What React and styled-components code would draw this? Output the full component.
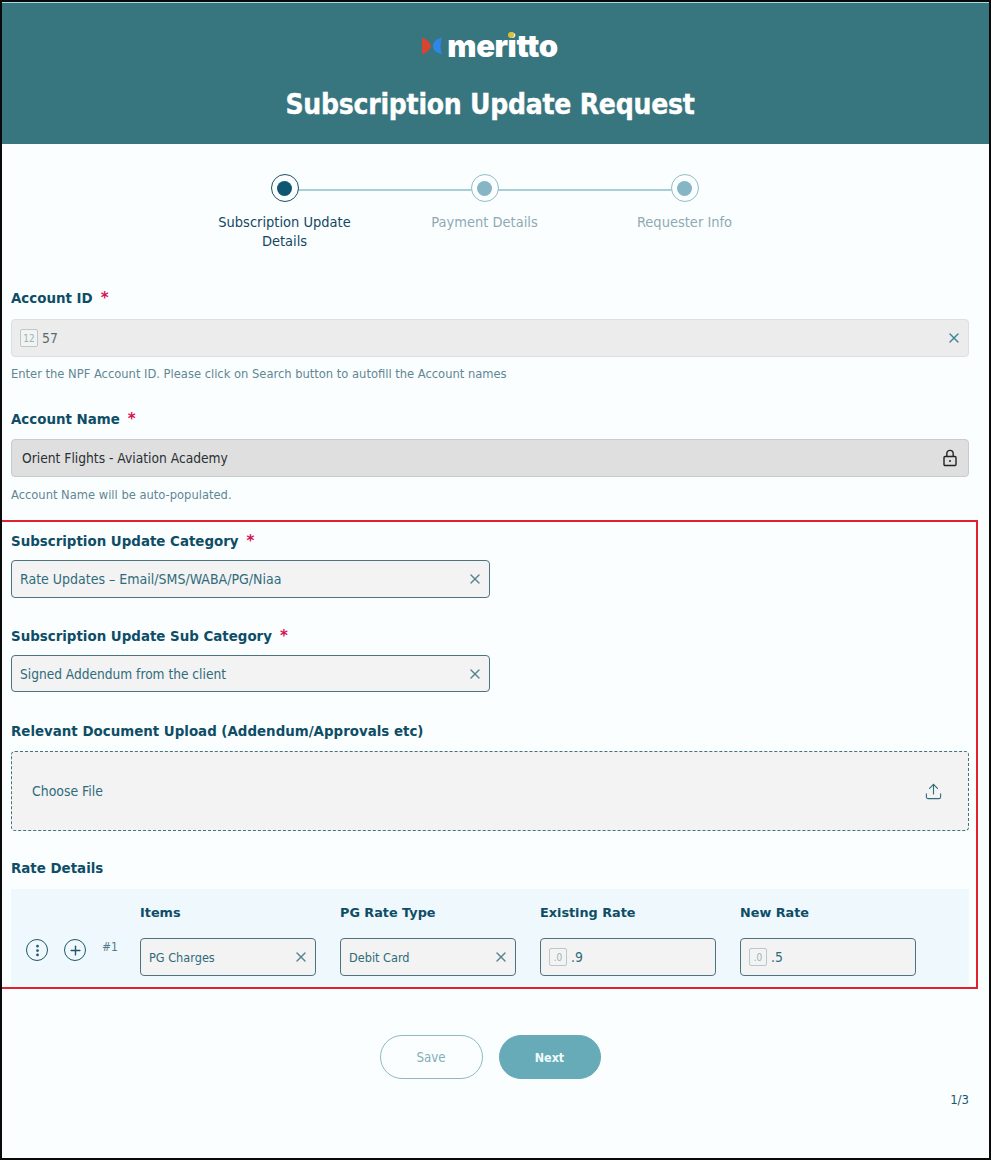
import React from "react";
import styled, { createGlobalStyle } from "styled-components";
import { X, Upload, Plus, EllipsisVertical } from "lucide-react";

const Global = createGlobalStyle`
  html, body { margin: 0; padding: 0; background: #000; }
  body { font-family: "DejaVu Sans Condensed", "DejaVu Sans", sans-serif; }
  * { box-sizing: border-box; }
`;

const Page = styled.div`
  position: relative;
  width: 991px;
  height: 1160px;
  border: solid #0a0a0a;
  border-width: 2px;
  background: #fbfeff;
  overflow: hidden;
`;
const Header = styled.header`
  height: 142px;
  border-top: 1px solid #a9dce2;
  background: #37757f;
  display: flex;
  flex-direction: column;
  align-items: center;
  padding: 27px 11px 0 0;
`;
const Logo = styled.div`
  display: flex;
  align-items: center;
  gap: 3px;
  height: 32px;
`;
const LogoWord = styled.span`
  position: relative;
  font-family: Inter, sans-serif;
  font-weight: 900;
  font-size: 31px;
  line-height: 32px;
  letter-spacing: -0.4px;
  color: #fff;
`;
const LogoDot = styled.i`
  position: absolute;
  left: 61px;
  top: 2px;
  width: 6px;
  height: 6px;
  border-radius: 50%;
  background: #d6c23c;
`;
const Title = styled.h1`
  margin: 26px 0 0;
  font-size: 28px;
  line-height: 34px;
  font-weight: 700;
  letter-spacing: -0.25px;
  -webkit-text-stroke: 0.4px #fff;
  color: #fff;
`;
const Stepper = styled.div`
  display: grid;
  grid-template-columns: repeat(3, 200px);
  justify-content: center;
  margin: 30px 0 0 -22px;
  height: 114px;
`;
const Step = styled.div`
  position: relative;
  display: flex;
  flex-direction: column;
  align-items: center;
  text-align: center;
`;
const StepRing = styled.div`
  width: 28px;
  height: 28px;
  border-radius: 50%;
  border: 1px solid ${p => (p.$active ? "#1c5068" : "#8fbcc6")};
  background: #fbfeff;
  display: flex;
  align-items: center;
  justify-content: center;
  z-index: 1;
`;
const StepDot = styled.div`
  width: 15px;
  height: 15px;
  border-radius: 50%;
  background: ${p => (p.$active ? "#0f5673" : "#86b6c5")};
`;
const StepLine = styled.div`
  position: absolute;
  left: 50%;
  width: 100%;
  top: 15px;
  height: 2px;
  background: #a9cfd6;
`;
const StepLabel = styled.div`
  margin-top: 11px;
  width: 150px;
  font-size: 14.5px;
  line-height: 19px;
  color: ${p => (p.$active ? "#13475f" : "#8eaab5")};
`;
const Form = styled.main`
  padding: 0 20px 0 9px;
`;
const Field = styled.div`
  margin-bottom: ${p => p.$mb || 0}px;
`;
const Label = styled.label`
  display: block;
  font-family: "DejaVu Sans", sans-serif;
  font-weight: 700;
  font-size: ${p => p.$size || 13.4}px;
  line-height: 20px;
  color: #0e4d66;
  margin-bottom: ${p => p.$mb ?? 10}px;
`;
const Star = styled.span`
  color: #d5124f;
  margin-left: 8px;
  font-size: 15px;
  font-weight: 700;
`;
const Input = styled.div`
  display: flex;
  align-items: center;
  height: ${p => p.$h || 38}px;
  width: ${p => p.$w || "100%"};
  padding: 0 6px 0 ${p => p.$pl || 8}px;
  border-radius: 4px;
  font-size: ${p => p.$size || 13.8}px;
  border: 1px solid ${p => p.$border || "#4d7380"};
  background: ${p => p.$bg || "#f3f3f3"};
  color: ${p => p.$color || "#2f6b7b"};
`;
const InputText = styled.span`
  flex: 1;
  white-space: nowrap;
`;
const Help = styled.div`
  margin-top: ${p => p.$mt || 8}px;
  font-size: 12.8px;
  line-height: 18px;
  color: #5f8794;
`;
const TypeBadge = styled.span`
  display: inline-flex;
  align-items: center;
  justify-content: center;
  width: 18px;
  height: 18px;
  margin-right: 4px;
  border: 1px solid #bcc7ca;
  border-radius: 2px;
  background: #f2f4f4;
  color: #a3b0b4;
  font-size: 10px;
`;
const ClearIcon = styled(X)`
  width: 16px;
  height: 16px;
  flex: none;
  color: ${p => p.$tone || "#3f8196"};
`;
const LockSvg = styled.svg`
  width: 16px;
  height: 18px;
  margin-right: 4px;
  flex: none;
`;
const Drop = styled.div`
  display: flex;
  align-items: center;
  justify-content: space-between;
  height: 80px;
  padding: 0 25px 0 20px;
  border: 1px dashed #42747f;
  border-radius: 4px;
  background: #f3f3f3;
  font-size: 13.9px;
  color: #2f6b7b;
`;
const UploadIcon = styled(Upload)`
  width: 19px;
  height: 19px;
  color: #2f6b7b;
`;
const RatePanel = styled.div`
  display: flex;
  align-items: flex-start;
  height: 97px;
  padding: 14px 0 0 15px;
  background: #eff8fd;
`;
const RoundBtn = styled.div`
  width: 22px;
  height: 22px;
  border: 1.3px solid #21566b;
  border-radius: 50%;
  display: flex;
  align-items: center;
  justify-content: center;
  margin-right: 16px;
  color: #21566b;
`;
const RowActions = styled.div`
  display: flex;
  align-items: center;
  width: 114px;
  padding-top: 36px;
`;
const RowNum = styled.span`
  font-size: 12px;
  color: #53788a;
  margin-top: -6px;
`;
const RateGrid = styled.div`
  display: grid;
  grid-template-columns: repeat(4, 176px);
  column-gap: 24px;
`;
const Actions = styled.div`
  display: flex;
  justify-content: center;
  gap: 16px;
  margin-top: 49px;
`;
const Pill = styled.button`
  width: ${p => p.$w}px;
  height: 44px;
  border-radius: 22px;
  font-family: inherit;
  font-size: ${p => (p.$primary ? 12.4 : 13.2)}px;
  font-weight: ${p => (p.$primary ? 700 : 400)};
  border: 1px solid ${p => (p.$primary ? "#67abb9" : "#8fb9bf")};
  background: ${p => (p.$primary ? "#67abb9" : "#fbfeff")};
  color: ${p => (p.$primary ? "#f1fbfc" : "#82aeb4")};
`;
const Pager = styled.div`
  margin-top: 12px;
  text-align: right;
  font-size: 13px;
  line-height: 18px;
  color: #21566b;
`;
const Annotation = styled.div`
  position: absolute;
  left: -2px;
  top: 518px;
  width: 978px;
  height: 469px;
  border: 2.5px solid #e2202e;
  pointer-events: none;
`;

const Lock = () => (
  <LockSvg viewBox="0 0 16 18" fill="none" stroke="#222" strokeWidth="1.4">
    <rect x="2" y="7.5" width="12" height="9" rx="1" />
    <path d="M4.8 7.5V4.6a3.2 3.2 0 0 1 6.4 0v2.9" />
    <circle cx="8" cy="12" r="1" fill="#222" stroke="none" />
  </LockSvg>
);

const steps = [
  { label: "Subscription Update Details", active: true },
  { label: "Payment Details" },
  { label: "Requester Info", last: true },
];
const rates = [
  { label: "Items", value: "PG Charges" },
  { label: "PG Rate Type", value: "Debit Card" },
  { label: "Existing Rate", value: ".9", num: true },
  { label: "New Rate", value: ".5", num: true },
];

export default function App() {
  return (
    <Page>
      <Global />
      <Header>
        <Logo>
          <svg width="22" height="20" viewBox="0 0 22 20">
            <path d="M0 1.5 C4 3 8 6 9 10 C8 14 4 17 0 18.5 Z" fill="#d8442f" />
            <path d="M20 1.5 C14 3 11 6 11 10 C11 14 14 17 20 18.5 C18 13 18 7 20 1.5 Z" fill="#2f86e6" />
          </svg>
          <LogoWord>meritto<LogoDot /></LogoWord>
        </Logo>
        <Title>Subscription Update Request</Title>
      </Header>

      <Stepper>
        {steps.map(s => (
          <Step key={s.label}>
            {!s.last && <StepLine />}
            <StepRing $active={s.active}><StepDot $active={s.active} /></StepRing>
            <StepLabel $active={s.active}>{s.label}</StepLabel>
          </Step>
        ))}
      </Stepper>

      <Form>
        <Field $mb={26}>
          <Label $mb={10}>Account ID<Star>*</Star></Label>
          <Input $border="#dcdfe0" $bg="#ececec" $color="#5b6a70">
            <TypeBadge>12</TypeBadge>
            <InputText>57</InputText>
            <ClearIcon />
          </Input>
          <Help $mt={8}>Enter the NPF Account ID. Please click on Search button to autofill the Account names</Help>
        </Field>
        <Field $mb={27}>
          <Label $mb={9}>Account Name<Star>*</Star></Label>
          <Input $border="#c9cccc" $bg="#dfdfdf" $color="#2b3033" $pl={10} $size={13.7}>
            <InputText>Orient Flights - Aviation Academy</InputText>
            <Lock />
          </Input>
          <Help $mt={9}>Account Name will be auto-populated.</Help>
        </Field>
        <Field $mb={28}>
          <Label $mb={8}>Subscription Update Category<Star>*</Star></Label>
          <Input $w="479px" $size={14}>
            <InputText>Rate Updates – Email/SMS/WABA/PG/Niaa</InputText>
            <ClearIcon $tone="#5b8190" />
          </Input>
        </Field>
        <Field $mb={30}>
          <Label $mb={8}>Subscription Update Sub Category<Star>*</Star></Label>
          <Input $w="479px" $h={37} $size={13.6}>
            <InputText>Signed Addendum from the client</InputText>
            <ClearIcon $tone="#5b8190" />
          </Input>
        </Field>
        <Field $mb={28}>
          <Label $mb={9}>Relevant Document Upload (Addendum/Approvals etc)</Label>
          <Drop>
            Choose File
            <UploadIcon strokeWidth={1.4} />
          </Drop>
        </Field>
        <Field>
          <Label>Rate Details</Label>
          <RatePanel>
            <RowActions>
              <RoundBtn><EllipsisVertical size={15} strokeWidth={2.4} /></RoundBtn>
              <RoundBtn><Plus size={15} strokeWidth={2.2} /></RoundBtn>
              <RowNum>#1</RowNum>
            </RowActions>
            <RateGrid>
              {rates.map(r => (
                <div key={r.label}>
                  <Label $mb={15} $size={12.8}>{r.label}</Label>
                  <Input $size={r.num ? 13.8 : 12.6}>
                    {r.num && <TypeBadge>.0</TypeBadge>}
                    <InputText>{r.value}</InputText>
                    {!r.num && <ClearIcon $tone="#5b8190" />}
                  </Input>
                </div>
              ))}
            </RateGrid>
          </RatePanel>
        </Field>
        <Actions>
          <Pill $w={103}>Save</Pill>
          <Pill $primary $w={102}>Next</Pill>
        </Actions>
        <Pager>1/3</Pager>
      </Form>
      <Annotation />
    </Page>
  );
}
